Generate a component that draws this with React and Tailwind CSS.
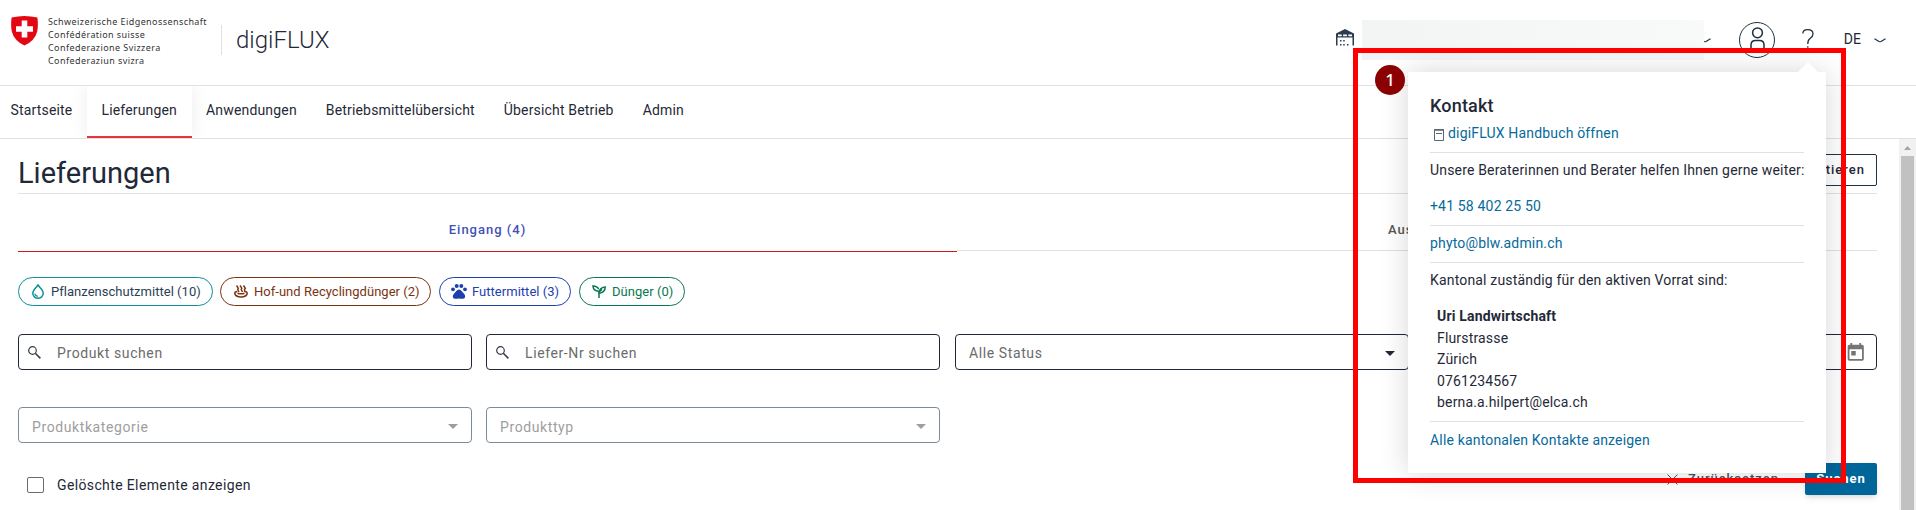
import { MdToday } from "react-icons/md";

const NAV = ["Startseite", "Lieferungen", "Anwendungen", "Betriebsmittelübersicht", "Übersicht Betrieb", "Admin"];

function Shield() {
  return (
    <svg className="mt-4 h-[30px] w-[27px]" viewBox="0 0 27 30">
      <path d="M.6 1.6Q13.500-1.400 26.400 1.600Q27.400 9 26.200 15.500Q24 24.500 13.500 29.600Q3 24.500.8 15.500Q-.4 9 .6 1.600Z" fill="#e30613" />
      <path d="M10.700 4.500h5.600v5.700h5.700v5.600h-5.700v5.700h-5.600v-5.700H5v-5.600h5.700Z" fill="#fff" />
    </svg>
  );
}

function Barn() {
  return (
    <svg className="h-[17px] w-[18px]" viewBox="0 0 18 17" fill="#2b3b50">
      <path d="M0 4.500 9 0l9 4.500v12h-1.500V8.600H1.500v7.900H0Z" />
      <path d="M2 5.400h3.700v1.900H2zM7.100 5.400h3.800v1.900H7.100zM12.300 5.400H16v1.900h-3.700z" fill="#fff" />
      <path d="M4 11h1.500v1.500H4zM7.200 11h1.500v1.500H7.200zM4 15h1.500v1.500H4zM7.200 15h1.500v1.500H7.200zM11 15h1.500v1.500H11z" />
    </svg>
  );
}

function Chevron() {
  return (
    <svg className="h-[5px] w-3" viewBox="0 0 12 5" fill="none" stroke="#1f2f40" strokeWidth="1.100">
      <path d="M.5.700 5 3.500Q6 4 7 3.500L11.500.700" />
    </svg>
  );
}

function SearchIcon() {
  return (
    <svg className="h-[13px] w-[13px]" viewBox="0 0 13 13" fill="none" stroke="#333b47" strokeWidth="1.200">
      <circle cx="4.500" cy="4.500" r="3.800" />
      <path d="M7.300 7.300 12.400 12.400" strokeWidth="1.500" />
    </svg>
  );
}

function Triangle({ className }) {
  return (
    <svg className={"relative top-px h-[5px] w-[10px] " + className} viewBox="0 0 10 5" fill="currentColor">
      <path d="M0 0h10L5 5Z" />
    </svg>
  );
}

function Droplet() {
  return (
    <svg className="h-[15px] w-[12px]" viewBox="0 0 12 15" fill="none" stroke="#0e8f9a" strokeWidth="1.500">
      <path d="M6 1C4.500 3.500.8 6.200.8 9.300a5.200 5 0 0 0 10.400 0C11.200 6.200 7.500 3.500 6 1Z" />
      <path d="M2.800 9.600Q3.200 12 5.800 12.400" strokeWidth="1.200" />
    </svg>
  );
}

function HotBowl() {
  return (
    <svg className="h-[13px] w-[14px]" viewBox="0 0 14 13" fill="none" stroke="#7a3411" strokeWidth="1.500">
      <path d="M2.500.500 4.300 3.200 3.700 4.500 5 7M6 .500 7.800 3.200 7.200 4.500 8.500 7M9.500.500 11.300 3.200 10.500 4.500 10.800 7" />
      <path d="M3.300 6.500Q.6 6.800.8 8.500 1.500 11.900 7 11.900 12.500 11.900 13.200 8.500 13.400 6.900 11 6.500M3.500 8.200Q7 9.500 10.500 8.200" />
    </svg>
  );
}

function Paw() {
  return (
    <svg className="h-[15px] w-[16px]" viewBox="0 0 16 15" fill="#1e40af">
      <circle cx="2" cy="5.300" r="1.900" />
      <circle cx="5.700" cy="2" r="2" />
      <circle cx="10.300" cy="2" r="2" />
      <circle cx="14" cy="5.300" r="1.900" />
      <path d="M8 5.500C5.800 5.500 4.800 8 3 9.800 1.300 11.500 1.500 14.800 4 14.800c1.500 0 2.500-.3 4-.3s2.500.3 4 .3c2.500 0 2.700-3.300 1-5C11.200 8 10.200 5.500 8 5.500Z" />
    </svg>
  );
}

function Sprout() {
  return (
    <svg className="h-[13px] w-[14px]" viewBox="0 0 14 13" fill="none" stroke="#08794f" strokeWidth="1.500">
      <path d="M7 13V8.500Q7 2.700 13.200 2 13.200 7.500 7 8.200" />
      <path d="M6.600 6.200Q1.500 6.200.9.900 5.300.900 6.700 4.200M7 8.500Q7 6 10 4.500" />
    </svg>
  );
}

const CHIPS = [
  { label: "Pflanzenschutzmittel (10)", Icon: Droplet, cls: "w-[195px] border-[#0e8f9a] text-[#2b3f55] pl-[13px]", gap: "ml-[7px]" },
  { label: "Hof-und Recyclingdünger (2)", Icon: HotBowl, cls: "ml-[7px] w-[211px] border-[#7a3411] text-[#7a3411] pl-[13px]", gap: "ml-[6px]" },
  { label: "Futtermittel (3)", Icon: Paw, cls: "ml-2 w-[132px] border-[#1e40af] text-[#1e40af] pl-[11px]", gap: "ml-[5px]" },
  { label: "Dünger (0)", Icon: Sprout, cls: "ml-2 w-[106px] border-[#08794f] text-[#08794f] pl-[12px]", gap: "ml-[6px]" },
];

function Popup() {
  return (
    <div className="absolute left-[1408px] top-[72px] h-[401px] w-[418px] bg-white px-[22px] text-[14px] tracking-[0.170px] text-[#1f2937] shadow-[0_0_28px_rgba(0,0,0,0.16)]">
      <svg className="absolute left-[390px] top-[-10px] h-[10px] w-5" viewBox="0 0 20 10">
        <path d="M0 10 10 0l10 10Z" fill="#fff" />
      </svg>
      <div className="flex h-[80px] flex-col pt-[22px]">
        <h2 className="w-max text-[18px] font-medium leading-6">Kontakt</h2>
        <div className="ml-1 mt-[5px] flex items-center leading-5">
          <svg className="mt-1 h-3 w-[10px]" viewBox="0 0 10 12" fill="none" stroke="#5d6673">
            <path d="M.5.500v11h9V.500ZM2 4.500h6" />
            <path d="M0 1h10" strokeWidth="1.500" />
          </svg>
          <a className="ml-1 text-[#066a9b]">digiFLUX Handbuch öffnen</a>
        </div>
      </div>
      <div className="h-[73px] border-t border-[#dfe1e3] pt-[7px] leading-5">
        <p className="w-max">Unsere Beraterinnen und Berater helfen Ihnen gerne weiter:</p>
        <a className="mt-4 block w-max text-[#066a9b]">+41 58 402 25 50</a>
      </div>
      <div className="h-[37px] border-t border-[#dfe1e3] pt-[7px] leading-5">
        <a className="block w-max text-[#066a9b]">phyto@blw.admin.ch</a>
      </div>
      <div className="h-[159px] border-t border-[#dfe1e3] pt-[7px] leading-5">
        <p className="w-max">Kantonal zuständig für den aktiven Vorrat sind:</p>
        <div className="ml-[7px] mt-[16px] leading-[21.600px]">
          <p className="w-max font-bold">Uri Landwirtschaft</p>
          <p className="w-max">Flurstrasse</p>
          <p className="w-max">Zürich</p>
          <p className="w-max">0761234567</p>
          <p className="w-max">berna.a.hilpert@elca.ch</p>
        </div>
      </div>
      <div className="border-t border-[#dfe1e3] pt-2 leading-5">
        <a className="block w-max text-[#066a9b]">Alle kantonalen Kontakte anzeigen</a>
      </div>
    </div>
  );
}

export default function App() {
  return (
    <div className="relative h-[510px] w-full overflow-hidden bg-white font-[Roboto,sans-serif] text-[#1f2937]">
      <header className="flex h-[86px] border-b border-[#dfe1e3] pl-[11px]">
        <Shield />
        <div className="ml-[10px] mt-[15px] w-[173px] font-[Noto_Sans,sans-serif] text-[9px] leading-[13px] tracking-[0.420px] text-[#333]">
          <p className="w-max">Schweizerische Eidgenossenschaft</p>
          <p className="w-max">Confédération suisse</p>
          <p className="w-max">Confederazione Svizzera</p>
          <p className="w-max">Confederaziun svizra</p>
        </div>
        <div className="mt-[25px] h-[30px] w-px bg-[#dfe1e3]" />
        <div className="ml-[14px] mt-[24px] h-8 text-[24px] font-light leading-8">digiFLUX</div>
        <div className="ml-auto flex h-20 items-center pr-[30px]">
          <div className="-mt-[5px]"><Barn /></div>
          <div className="ml-2 h-[40px] w-[342px] bg-linear-to-r from-[#f3f4f4] to-[#f8f9f9]" />
          <div className="flex w-[7px] justify-end overflow-hidden"><div><Chevron /></div></div>
          <svg className="ml-[28px] h-9 w-9" viewBox="0 0 36 36" fill="none" stroke="#1f2f40">
            <circle cx="18" cy="18" r="17.500" />
            <circle cx="18.500" cy="10.800" r="4.900" strokeWidth="1.500" />
            <path d="M12 27.500V23q0-4.500 4.500-4.500h4q4.500 0 4.500 4.500v4.500Z" strokeWidth="1.500" />
          </svg>
          <svg className="ml-[27px] -mt-1 h-[19px] w-3" viewBox="0 0 12 19" fill="none" stroke="#1f2f40" strokeWidth="1.300">
            <path d="M.8 4.500Q1 .7 5.800.7 11 .8 11 5 11 7.500 8 9.500 5.800 11 5.800 15M5.800 17.200v1.500" />
          </svg>
          <span className="-mt-px ml-[30px] text-[14px]">DE</span>
          <div className="ml-[13px]"><Chevron /></div>
        </div>
      </header>

      <nav className="flex h-[53px] border-b border-[#dfe1e3] text-[14px] leading-[49px] tracking-[0.170px]">
        {NAV.map((n, i) => (
          <div key={n} className={i === 1 ? "h-[52px] border-b-2 border-[#e5343d] px-[14.500px] shadow-[0_0_16px_rgba(0,0,0,0.08)] [clip-path:inset(0_-20px)]" : i === 0 ? "pl-[10.500px] pr-[14.500px]" : "px-[14.500px]"}>
            <span>{n}</span>
          </div>
        ))}
      </nav>

      <div className="flex h-[371px]">
        <main className="w-[1899px] pl-[18px] pr-[22px]">
          <div className="flex h-[55px] justify-between border-b border-[#dfe1e3]">
            <h1 className="mt-[16px] text-[29px] leading-[36px]">Lieferungen</h1>
            <button className="mt-[15px] h-[32px] rounded-[2px] border border-[#1f3347] px-[11px] text-[13px] font-medium tracking-[1px]">Exportieren</button>
          </div>
          <div className="flex h-[58px] text-[13px] font-medium tracking-[1px]">
            <div className="flex w-[939px] shrink-0 items-center justify-center border-b border-[#d3151f] pt-[14px] text-[#3f51b5]">Eingang (4)</div>
            <div className="flex h-[57px] min-w-0 flex-1 items-center border-b border-[#dfe1e3] pl-[431px] pt-[15px] text-[#555]">Ausgang (4)</div>
          </div>
          <div className="mt-[25px] flex text-[13px] tracking-[0.030px]">
            {CHIPS.map(({ label, Icon, cls, gap }) => (
              <div key={label} className={"flex h-[29px] items-center rounded-full border " + cls}>
                <Icon />
                <span className={"whitespace-nowrap " + gap}>{label}</span>
              </div>
            ))}
          </div>
          <div className="mt-7 flex gap-[14px] text-[14px] tracking-[0.600px] text-[#6b6b6b]">
            {["Produkt suchen", "Liefer-Nr suchen"].map((t) => (
              <div key={t} className="flex h-9 w-[454px] items-center rounded-[4px] border border-[#1f2937] pl-[9px]">
                <SearchIcon />
                <span className="ml-[16px] pt-[2px]">{t}</span>
              </div>
            ))}
            <div className="ml-px flex h-9 w-[454px] items-center justify-between rounded-[4px] border border-[#1f2937] pl-[13px] pr-[13px]">
              <span className="pt-[3px]">Alle Status</span>
              <Triangle className="text-[#1f2937]" />
            </div>
            <div className="flex h-9 w-[454px] items-center justify-end rounded-[4px] border border-[#1f2937] pr-[9.500px] pt-[2px]">
              <MdToday className="text-[21.500px] text-[#757575]" />
            </div>
          </div>
          <div className="mt-[37px] flex gap-[14px] text-[14px] tracking-[0.600px] text-[#9e9e9e]">
            {["Produktkategorie", "Produkttyp"].map((t) => (
              <div key={t} className="flex h-9 w-[454px] items-center justify-between rounded-[4px] border border-[#7d8b99] px-[13px]">
                <span className="pt-[4px]">{t}</span>
                <Triangle className="text-[#9e9e9e]" />
              </div>
            ))}
          </div>
          <div className="mt-5 flex h-8 items-start">
            <div className="ml-[9px] mt-[14px] h-4 w-[17px] rounded-[2px] border border-[#6b6b6b]" />
            <span className="ml-[13px] mt-[12px] text-[14px] leading-5 tracking-[0.370px]">Gelöschte Elemente anzeigen</span>
            <div className="ml-auto flex h-8 items-center text-[13px] font-medium tracking-[1px] text-[#4b5563]">
              <svg className="h-[11px] w-[11px]" viewBox="0 0 11 11" stroke="#4b5563"><path d="m.5.500 10 10m0-10-10 10" /></svg>
              <span className="ml-[10px]">Zurücksetzen</span>
              <button className="ml-[26px] h-8 w-[72px] rounded-[2px] bg-[#006699] font-bold text-white shadow-md">Suchen</button>
            </div>
          </div>
        </main>
        <div className="w-[17px] bg-[#f1f1f1]">
          <div className="flex h-[17px] items-center justify-center">
            <svg className="h-1 w-[7px]" viewBox="0 0 7 4"><path d="M0 4h7L3.500 0Z" fill="#a3a3a3" /></svg>
          </div>
          <div className="ml-[2px] h-[354px] w-[13px] bg-[#c1c1c1]" />
        </div>
      </div>

      <Popup />
      <div className="absolute left-[1353px] top-[48px] h-[435px] w-[493px] border-[5px] border-[#ff0000]" />
      <div className="absolute left-[1375px] top-[65px] flex h-[30px] w-[30px] items-center justify-center rounded-full bg-[#8b0000] pb-px font-[Noto_Sans,sans-serif] text-[17px] font-medium text-white">1</div>
    </div>
  );
}
